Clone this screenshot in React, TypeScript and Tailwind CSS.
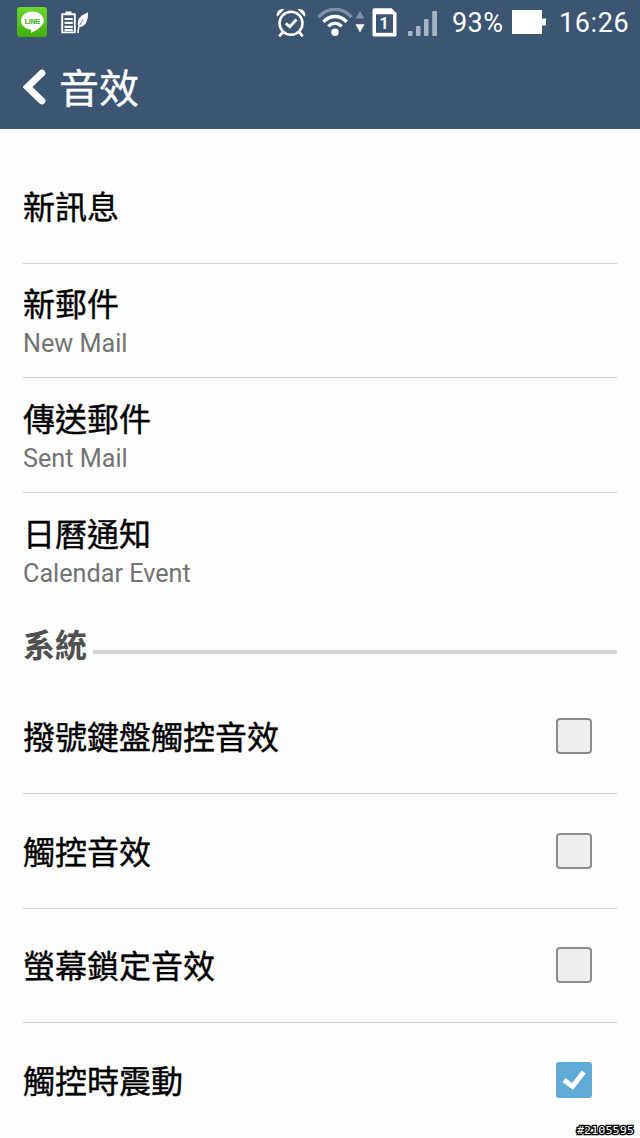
import React from 'react';

function LineIcon() {
  return (
    <svg width="30" height="30" viewBox="0 0 30 30">
      <defs>
        <linearGradient id="lineGreen" x1="0" y1="0" x2="0" y2="1">
          <stop offset="0" stopColor="#6fd62f" />
          <stop offset="1" stopColor="#3fae0c" />
        </linearGradient>
      </defs>
      <rect width="30" height="30" rx="3" fill="url(#lineGreen)" />
      <path d="M15.400 4.600C9 4.600 4 8.600 4 13.700c0 4.500 4 8 9.300 8.700 1.300.3.700 1.600.7 2.900 0 .7.300.7 1 .300 3-1.700 6.800-4 9.300-6.600 1.600-1.600 2.500-3.400 2.500-5.300 0-5.100-5-9.100-11.400-9.100z" fill="#fff" />
      <text x="15.400" y="16.600" textAnchor="middle" textLength="15.500" lengthAdjust="spacingAndGlyphs" className="font-['Liberation_Sans',sans-serif] text-[8px] font-bold" fill="#43b516" stroke="#43b516" strokeWidth=".2">LINE</text>
    </svg>
  );
}

function PowerSaverIcon() {
  return (
    <svg width="28" height="24" viewBox="0 0 28 24" fill="none">
      <path d="M1.200 3.200h12.600v18.200H1.200z" stroke="#fff" strokeWidth="1.900" />
      <path d="M4.500 .5h6V3h-6z" fill="#fff" />
      <path d="M3.500 8h8.200M3.500 11.900h8.200M3.500 15.800h8.200M3.500 19h8.200" stroke="#fff" strokeWidth="2.200" />
      <path d="M27 1.200c-6.500 3-11 6-10 12.800l.8 1.800c5.600.3 9.700-4.700 9.200-14.600z" fill="#fff" />
      <path d="M22.500 8.500c-2 2.500-3.300 4.200-4.200 7" stroke="#3c5572" strokeWidth=".8" />
      <path d="M18.400 14c-.9 2.500-1.300 4.700-1.400 8" stroke="#fff" strokeWidth="1.500" />
    </svg>
  );
}

function AlarmIcon() {
  return (
    <svg width="30" height="30" viewBox="0 0 30 30" fill="none" stroke="#fff">
      <circle cx="15" cy="15.300" r="11.500" strokeWidth="2.500" />
      <path d="M9.800 15.200l4 3.600 6.700-7.300" strokeWidth="2.800" />
      <path d="M6.800 24.200L3.300 28.400M23.200 24.200l3.500 4.200" strokeWidth="2.800" />
      <path d="M.8 7.900C.2 3.300 3.500.4 8.500 1.100L1.600 8.500zM29.200 7.900c.6-4.600-2.700-7.500-7.700-6.800l6.900 7.400z" fill="#fff" stroke="none" />
    </svg>
  );
}

function WifiIcon() {
  return (
    <svg width="36" height="30" viewBox="0 0 36 30" fill="none" strokeWidth="3.300">
      <path d="M1.400 10.200C10.700-.3 25.300-.3 34.600 10.200" stroke="#8192a7" />
      <path d="M6.400 14.900c6.500-7.200 16.700-7.200 23.200 0M11.300 19.300c4-4 9.400-4 13.400 0" stroke="#fff" />
      <circle cx="18" cy="25.300" r="3.700" fill="#fff" />
    </svg>
  );
}

function TrafficIcon() {
  return (
    <svg width="10" height="22" viewBox="0 0 10 22">
      <path d="M5 0l4.500 7.500H.5z" fill="#8192a7" />
      <path d="M.5 13.200h9L5 21.500z" fill="#fff" />
    </svg>
  );
}

function SimIcon() {
  return (
    <svg width="25" height="29" viewBox="0 0 25 29">
      <path d="M2 .2h17.500L24.500 5v22q0 1.500-1.500 1.500H2Q.5 28.500.5 27V2Q.5.200 2 .2z" fill="#fff" />
      <path d="M4 6.300h17v18.500H4z" fill="#3c5572" />
      <text x="12" y="21.300" textAnchor="middle" className="font-['Roboto',sans-serif] text-[16px] font-bold" fill="#fff">1</text>
    </svg>
  );
}

function SignalIcon() {
  return (
    <svg width="30" height="26" viewBox="0 0 30 26" fill="#a7b4c4">
      <rect y="20" width="4.500" height="5" rx="1" />
      <rect x="8" y="15" width="4.500" height="10" rx="1" />
      <rect x="16" y="8" width="4.500" height="17" rx="1" />
      <rect x="24.200" y="0" width="4.800" height="25" rx="1" />
    </svg>
  );
}

function StatusBar() {
  return (
    <div className="flex h-[45px] items-start font-['Roboto',sans-serif] text-[27px] leading-[30px]">
      <div className="ml-[17px] mt-[7px]"><LineIcon /></div>
      <div className="ml-[14px] mt-[11px]"><PowerSaverIcon /></div>
      <div className="ml-auto mt-2"><AlarmIcon /></div>
      <div className="ml-[11px] mt-[7px]"><WifiIcon /></div>
      <div className="ml-[2px] mt-[11px]"><TrafficIcon /></div>
      <div className="ml-[7px] mt-2"><SimIcon /></div>
      <div className="ml-[11px] mt-[11px]"><SignalIcon /></div>
      <span className="ml-[14px] mt-2 w-[56px] whitespace-nowrap tracking-[0.400px]">93%</span>
      <svg className="ml-[4px] mt-[10px]" width="34" height="24" viewBox="0 0 34 24" fill="#fff">
        <path d="M0 0h30v8.500h4v7h-4V24H0z" />
      </svg>
      <span className="ml-[13px] mt-2 w-[81px] whitespace-nowrap tracking-[0.600px]">16:26</span>
    </div>
  );
}

function Checkbox({ checked }: { checked: boolean }) {
  return checked ? (
    <span className="mr-[25px] size-9 rounded-[3px] bg-[#60abd6]">
      <svg width="36" height="36" viewBox="0 0 36 36" fill="none">
        <path d="M8 18l8.500 6.500L27.700 10" stroke="#fff" strokeWidth="5" />
      </svg>
    </span>
  ) : (
    <span className="mr-[25px] size-9 rounded-[4px] border-2 border-[#8c8c8c] bg-[#efefed]" />
  );
}

type Item = { title: string; detail?: string; checked?: boolean };

const sounds: Item[] = [
  { title: '新訊息' },
  { title: '新郵件', detail: 'New Mail' },
  { title: '傳送郵件', detail: 'Sent Mail' },
  { title: '日曆通知', detail: 'Calendar Event' },
];

const system: Item[] = [
  { title: '撥號鍵盤觸控音效', checked: false },
  { title: '觸控音效', checked: false },
  { title: '螢幕鎖定音效', checked: false },
  { title: '觸控時震動', checked: true },
];

function Row({ item }: { item: Item }) {
  return (
    <li className="flex h-[114.600px] items-center justify-between border-b border-[#cfcfcf] last:border-b-0">
      <div className={item.detail ? '' : 'pb-[2px]'}>
        <div className="text-[32px] leading-[40px] text-black [-webkit-text-stroke:0.400px_black]">{item.title}</div>
        {item.detail && (
          <div className="mt-[4px] pt-[2px] font-['Roboto',sans-serif] text-[25.200px] leading-[30px] text-[#737373]">
            <span className="relative top-px">{item.detail}</span>
          </div>
        )}
      </div>
      {item.checked !== undefined && <Checkbox checked={item.checked} />}
    </li>
  );
}

export default function App() {
  return (
    <div className="relative h-[1138px] overflow-hidden bg-[#fdfdfd] font-['Noto_Sans_CJK_TC',sans-serif]">
      <header className="h-[129px] bg-[#3c5572] text-white">
        <StatusBar />
        <div className="flex h-[84px] items-center pl-[23px]">
          <svg width="24" height="38" viewBox="0 0 24 38" fill="none">
            <path d="M19 5L4.500 19 19 33" stroke="#fff" strokeWidth="6.800" strokeLinecap="round" />
          </svg>
          <h1 className="ml-[12px] pb-[2px] text-[40px] leading-[50px] [-webkit-text-stroke:0.300px_white]">音效</h1>
        </div>
      </header>
      <main className="px-[23px] pt-5">
        <ul>{sounds.map((item) => <Row key={item.title} item={item} />)}</ul>
        <div className="flex h-[72px] items-center">
          <h2 className="text-[32px] font-bold leading-[40px] text-[#505050]">系統</h2>
          <div className="ml-[6px] mt-[17px] h-1 flex-1 bg-[#d3d5d5]" />
        </div>
        <ul>{system.map((item) => <Row key={item.title} item={item} />)}</ul>
      </main>
      <svg className="absolute bottom-0 right-0" width="68" height="18" viewBox="0 0 68 18">
        <text x="5" y="13.800" textLength="57" lengthAdjust="spacingAndGlyphs" className="font-['DejaVu_Sans_Mono',monospace] text-[11px]" fill="#fff" stroke="#000" strokeWidth="2.500" paintOrder="stroke">#2105595</text>
      </svg>
    </div>
  );
}
